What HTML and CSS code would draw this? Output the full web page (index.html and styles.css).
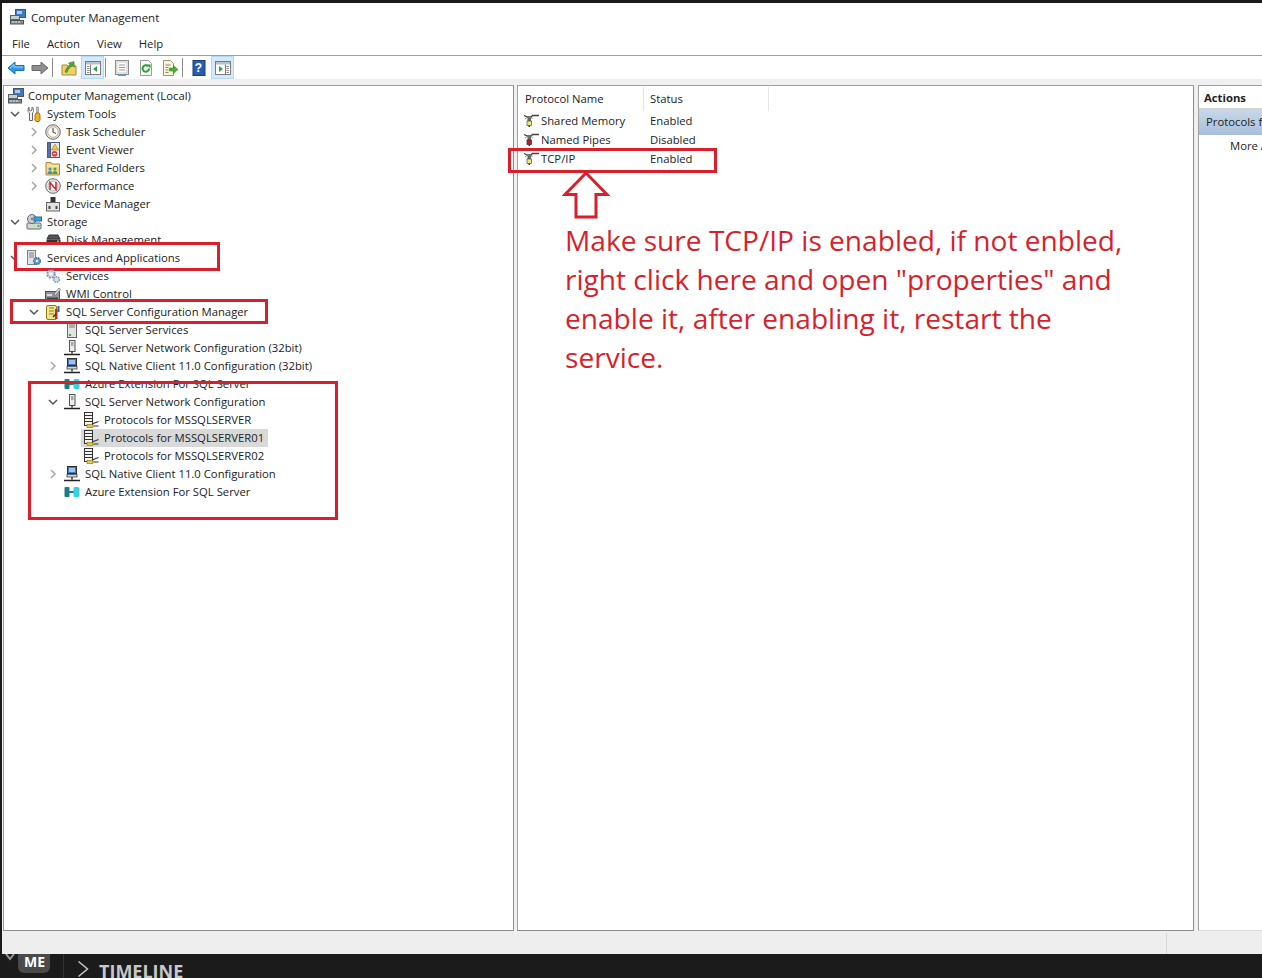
FILE: index.html
```html
<!DOCTYPE html>
<html lang="en">

<head>
  <meta charset="UTF-8">
  <title>Computer Management</title>
  <link rel="stylesheet" href="styles.css">
</head>

<body>
  <svg class="sprite" xmlns="http://www.w3.org/2000/svg">
    <symbol id="i-down" viewBox="0 0 10 6"><path d="M1 1l4 4 4-4" fill="none" stroke="#555" stroke-width="1.5"/></symbol>
    <symbol id="i-right" viewBox="0 0 6 10"><path d="M1 1l4 4-4 4" fill="none" stroke="#a6a6a6" stroke-width="1.5"/></symbol>

    <symbol id="i-computer" viewBox="0 0 16 16"><rect x="5.5" y=".5" width="10" height="8" fill="#3f78c4" stroke="#4a5560"/><rect x="7" y="2" width="5" height="3" fill="#a9cdf0"/><rect x=".5" y="6.5" width="9" height="4" fill="#c7ccd0" stroke="#5c6468"/><rect x=".5" y="11.5" width="13" height="3.5" fill="#8b9296" stroke="#4e5558"/><path d="M2 13h2M5 13h2M8 13h2" stroke="#e8e8e8"/></symbol>
    <symbol id="i-tools" viewBox="0 0 16 16"><path d="M3 1v3l1.500 1L6 4V1c1.200.8 1.600 2 1.600 3.500S7 6.500 6.500 7v7.500h-3V7C2.500 6.500 2 5.500 2 4.500S2 1.800 3 1z" fill="#f4f4f4" stroke="#666"/><rect x="10.500" y="1" width="2" height="6" fill="#b8b8b8" stroke="#777" stroke-width=".5"/><path d="M10 7h3l1 2v5l-1 1.500h-3l-1-1.500V9z" fill="#f0b323" stroke="#a06f10"/></symbol>
    <symbol id="i-clock" viewBox="0 0 16 16"><circle cx="8" cy="8" r="7.300" fill="#e9e4d6" stroke="#6d6d6d"/><circle cx="8" cy="8" r="5.300" fill="#fbfaf6" stroke="#b9b2a0"/><path d="M8 4v4l3 1.500" fill="none" stroke="#555" stroke-width="1.200"/></symbol>
    <symbol id="i-event" viewBox="0 0 16 16"><rect x="2.500" y=".5" width="12" height="15" fill="#e4ecf6" stroke="#4d5a86"/><rect x="2.500" y=".5" width="3" height="15" fill="#5a6ea6" stroke="#4d5a86"/><path d="M10 2l3.500 6h-7z" fill="#f2c531" stroke="#a5820f" stroke-width=".6"/><circle cx="9.500" cy="11.700" r="2.800" fill="#d33c3c"/><path d="M8 11.700h3" stroke="#fff"/></symbol>
    <symbol id="i-shared" viewBox="0 0 16 16"><path d="M1 5V2.500h5L7 4h7.500v11H1z" fill="#f1d68a" stroke="#a88b3c"/><rect x="2" y="5" width="12" height="1.500" fill="#fbeebc"/><circle cx="5" cy="9" r="1.500" fill="#3a8fc9"/><path d="M2.500 14c0-2 1-3 2.500-3s2.500 1 2.500 3z" fill="#3a8fc9"/><circle cx="10" cy="9" r="1.500" fill="#4aa24a"/><path d="M7.500 14c0-2 1-3 2.500-3s2.500 1 2.500 3z" fill="#4aa24a"/></symbol>
    <symbol id="i-perf" viewBox="0 0 16 16"><circle cx="8" cy="8" r="7.300" fill="#efefef" stroke="#666"/><circle cx="8" cy="8" r="5" fill="#fff" stroke="#b5b5b5"/><path d="M5 12V4.500l6 7V4" fill="none" stroke="#c42a2a" stroke-width="1.500"/></symbol>
    <symbol id="i-device" viewBox="0 0 16 16"><path d="M5.500 1h5v5h-5z" fill="#333"/><rect x="1.500" y="6.500" width="13" height="8.500" fill="#e2e2e2" stroke="#666"/><rect x="3.500" y="10" width="2" height="3" fill="#444"/><rect x="10.500" y="10" width="2" height="3" fill="#444"/></symbol>
    <symbol id="i-storage" viewBox="0 0 16 16"><rect x="1" y="9" width="14" height="6" rx="1" fill="#cfdcc8" stroke="#667"/><circle cx="6" cy="5" r="4.500" fill="#c9ced2" stroke="#667"/><circle cx="6" cy="5" r="1.200" fill="#7a8288"/><rect x="8" y="3" width="7.500" height="4" fill="#3aa0df" stroke="#24709f"/><rect x="11.500" y="11" width="2" height="2" fill="#4caf50"/></symbol>
    <symbol id="i-disk" viewBox="0 0 16 16"><path d="M2 7l2-4h9l2 4z" fill="#555" stroke="#333"/><rect x="1.500" y="7.500" width="14" height="4" fill="#333"/><rect x="12" y="8.500" width="2" height="1.500" fill="#5bd05b"/><rect x="1.500" y="11.500" width="14" height="3" fill="#e8d5d5" stroke="#b3a0a0"/></symbol>
    <symbol id="i-servapp" viewBox="0 0 16 16"><rect x="1.500" y=".5" width="8" height="14" fill="#dfe3e8" stroke="#7a828a"/><path d="M3 3h5M3 5h5M3 7h5" stroke="#7a828a"/><circle cx="11" cy="11" r="3.300" fill="#6da2d6" stroke="#3d6e9e" stroke-width="1.500" stroke-dasharray="1.600 .7"/><circle cx="11" cy="11" r="1.100" fill="#fff"/></symbol>
    <symbol id="i-gears" viewBox="0 0 16 16"><circle cx="6" cy="6" r="3.800" fill="#d9e2ec" stroke="#7f9ab8" stroke-width="2" stroke-dasharray="2 1"/><circle cx="6" cy="6" r="1.300" fill="#fff"/><circle cx="11.500" cy="11.500" r="2.800" fill="#d9e2ec" stroke="#7f9ab8" stroke-width="1.600" stroke-dasharray="1.600 .8"/></symbol>
    <symbol id="i-wmi" viewBox="0 0 16 16"><rect x=".5" y="5.500" width="14" height="10" fill="#8e9499" stroke="#4d5358"/><rect x="2" y="8" width="5" height="2" fill="#d8dce0"/><rect x="2" y="11.500" width="11" height="1.500" fill="#3e4449"/><path d="M9 8l5-6 1.500 1.500-5 6z" fill="#d7dbe0" stroke="#666" stroke-width=".7"/></symbol>
    <symbol id="i-sqlcfg" viewBox="0 0 16 16"><rect x="1.500" y="1.500" width="10" height="14" rx="1.500" fill="#f2e48a" stroke="#8f7d20"/><path d="M4 4h5M4 7h5M4 10h5" stroke="#8f7d20"/><rect x="10" y="5" width="2.500" height="10" fill="#c62a2a"/><rect x="12.500" y="2" width="2" height="6" fill="#2b5fa8"/><path d="M8 13l3-3" stroke="#333" stroke-width="1.400"/></symbol>
    <symbol id="i-tower" viewBox="0 0 16 16"><rect x="3.500" y=".5" width="9" height="15" fill="#e3e3e3" stroke="#666"/><path d="M5 3h6M5 5h6" stroke="#777"/><rect x="5" y="12" width="2" height="2" fill="#35b035"/></symbol>
    <symbol id="i-net" viewBox="0 0 16 16"><rect x="5.500" y=".5" width="5.500" height="11" fill="#ececec" stroke="#555"/><path d="M7 3h2.500M7 5h2.500" stroke="#666"/><path d="M8 11.500v2M0 14.500h16" stroke="#222" stroke-width="1.300"/></symbol>
    <symbol id="i-client" viewBox="0 0 16 16"><rect x="3.500" y=".5" width="9" height="7" fill="#3f78c4" stroke="#333"/><rect x="5" y="2" width="6" height="4" fill="#9cc6ee"/><rect x="3" y="8.500" width="10" height="2.500" fill="#d6d6d6" stroke="#444" stroke-width=".8"/><path d="M8 11v2.500M0 14.500h16" stroke="#222" stroke-width="1.300"/></symbol>
    <symbol id="i-azure" viewBox="0 0 16 16"><rect x=".5" y="3" width="5" height="10" rx="1" fill="#1b7f86"/><path d="M5 8h5" stroke="#1b7f86" stroke-width="2"/><rect x="9.500" y="3" width="6" height="10" rx="1.500" fill="#35d3e0"/></symbol>
    <symbol id="i-proto" viewBox="0 0 16 16"><rect x="1.500" y=".5" width="8" height="13" fill="#f4f4f4" stroke="#333"/><path d="M1.500 3.500h8M1.500 6.500h8M1.500 9.500h8" stroke="#333"/><rect x="4" y="12.500" width="6" height="3" fill="#e6c93a" stroke="#8f7d20" stroke-width=".7"/><path d="M9 12l6.500-2.500M10.500 14h5" stroke="#333" stroke-width="1.200"/></symbol>
    <symbol id="i-plug-on" viewBox="0 0 16 16"><path d="M1 2.500l3.500 1.500h3.500l1.500-1.500H16" fill="none" stroke="#444" stroke-width="1.300"/><path d="M4.500 4l-2.500 2M8 4l1.500 2" fill="none" stroke="#888"/><rect x="4.500" y="5" width="3.500" height="3" fill="#666"/><rect x="4" y="8" width="4.500" height="4.500" fill="#ecea7a" stroke="#55551a" stroke-width=".7"/><rect x="5.500" y="12.500" width="1.500" height="1.500" fill="#333"/></symbol>
    <symbol id="i-plug-off" viewBox="0 0 16 16"><path d="M1 2.500l3.500 1.500h3.500l1.500-1.500H16" fill="none" stroke="#444" stroke-width="1.300"/><path d="M4.500 4l-2.500 2M8 4l1.500 2" fill="none" stroke="#888"/><rect x="4.500" y="5" width="3.500" height="3" fill="#666"/><rect x="4" y="8" width="4.500" height="4.500" fill="#b4202c" stroke="#551a1a" stroke-width=".7"/><rect x="5.500" y="12.500" width="1.500" height="1.500" fill="#333"/></symbol>

    <symbol id="t-back" viewBox="0 0 18 16"><path d="M1 8l7-6v3.500h9v5H8V14z" fill="#2f9be6" stroke="#1c6fae"/><path d="M3 8l4-3.500V7h9" fill="none" stroke="#9fd6fa"/></symbol>
    <symbol id="t-fwd" viewBox="0 0 18 16"><path d="M17 8l-7-6v3.500H1v5h9V14z" fill="#8f8f8f" stroke="#6a6a6a"/></symbol>
    <symbol id="t-up" viewBox="0 0 16 16"><path d="M1 5h5l1 1h8v9H1z" fill="#f0cf6d" stroke="#a8892e"/><path d="M4 12c1-4 3-6 5-7L7.500 3 13 1.500 13.500 7 11.500 5.800C9.500 7 7 9 6 12.500z" fill="#4ea72e" stroke="#3a7d22" stroke-width=".5"/></symbol>
    <symbol id="t-tree" viewBox="0 0 16 16"><rect x=".5" y="1.500" width="15" height="13" fill="#fff" stroke="#7b7b7b"/><rect x="1" y="2" width="14" height="2.500" fill="#b6c2cc"/><path d="M5.500 4.500v10" stroke="#7b7b7b"/><path d="M2 6.500h2.500M2 8.500h2.500M2 10.500h2.500M2 12.500h2.500" stroke="#8a8a8a"/><path d="M12 6v6L8 9z" fill="#2f9e44"/></symbol>
    <symbol id="t-list" viewBox="0 0 16 16"><rect x="1.500" y=".5" width="13" height="14" fill="#f4f4f4" stroke="#8b8b8b"/><rect x="3" y="2" width="10" height="11" fill="#fff" stroke="#b5b5b5" stroke-width=".7"/><path d="M5 5h6M5 7.500h6M5 10h6" stroke="#9a9a9a"/><rect x="4" y="14.500" width="8" height="1.500" fill="#4aa8e0"/></symbol>
    <symbol id="t-refresh" viewBox="0 0 16 16"><path d="M2.500.5h8l3 3v12h-11z" fill="#f8f8f8" stroke="#9a9a9a"/><path d="M11 8.500a3.200 3.200 0 1 1-1-2.300" fill="none" stroke="#2f9e2f" stroke-width="2"/><path d="M8.500 4.500h4v4z" fill="#2f9e2f"/></symbol>
    <symbol id="t-export" viewBox="0 0 16 16"><path d="M1.500.5h7l3 3v12h-10z" fill="#f8f4dc" stroke="#9a9a7a"/><path d="M3.500 5h5M3.500 7.500h3M3.500 10h3M3.500 12.500h3" stroke="#8a8a6a"/><path d="M7.500 8h4V5.500L16 9.500l-4.500 4V11h-4z" fill="#4caf33" stroke="#2f7d1f" stroke-width=".5"/></symbol>
    <symbol id="t-help" viewBox="0 0 16 16"><rect x="2" y=".5" width="12" height="15" fill="#2a5db0" stroke="#1b3c78"/></symbol>
    <symbol id="t-action" viewBox="0 0 16 16"><rect x=".5" y="1.500" width="15" height="13" fill="#fff" stroke="#7b7b7b"/><rect x="1" y="2" width="14" height="2.500" fill="#b6c2cc"/><path d="M10.500 4.500v10" stroke="#7b7b7b"/><path d="M11.500 6.500H14M11.500 8.500H14M11.500 10.500H14M11.500 12.500H14" stroke="#8a8a8a"/><path d="M4 6v6l4-3z" fill="#2f9e44"/></symbol>
  </svg>

  <div class="window">
    <div class="titlebar">
      <svg class="ico"><use href="#i-computer"/></svg>
      <span>Computer Management</span>
    </div>
    <nav class="menubar">
      <span>File</span><span>Action</span><span>View</span><span>Help</span>
    </nav>
    <div class="toolbar">
      <button class="tb"><svg class="tb-wide"><use href="#t-back"/></svg></button>
      <button class="tb"><svg class="tb-wide"><use href="#t-fwd"/></svg></button>
      <i class="tb-sep"></i>
      <button class="tb"><svg class="ico"><use href="#t-up"/></svg></button>
      <button class="tb on"><svg class="ico"><use href="#t-tree"/></svg></button>
      <i class="tb-sep"></i>
      <button class="tb"><svg class="ico"><use href="#t-list"/></svg></button>
      <button class="tb"><svg class="ico"><use href="#t-refresh"/></svg></button>
      <button class="tb"><svg class="ico"><use href="#t-export"/></svg></button>
      <i class="tb-sep"></i>
      <button class="tb tb-help"><svg class="ico"><use href="#t-help"/></svg><b>?</b></button>
      <button class="tb on"><svg class="ico"><use href="#t-action"/></svg></button>
    </div>

    <div class="panes">
      <section class="pane tree">
        <div class="row l0"><span class="item"><svg class="ico"><use href="#i-computer"/></svg><span class="lbl">Computer Management (Local)</span></span></div>
        <div class="row l1"><svg class="chev"><use href="#i-down"/></svg><span class="item"><svg class="ico"><use href="#i-tools"/></svg><span class="lbl">System Tools</span></span></div>
        <div class="row l2"><svg class="chev"><use href="#i-right"/></svg><span class="item"><svg class="ico"><use href="#i-clock"/></svg><span class="lbl">Task Scheduler</span></span></div>
        <div class="row l2"><svg class="chev"><use href="#i-right"/></svg><span class="item"><svg class="ico"><use href="#i-event"/></svg><span class="lbl">Event Viewer</span></span></div>
        <div class="row l2"><svg class="chev"><use href="#i-right"/></svg><span class="item"><svg class="ico"><use href="#i-shared"/></svg><span class="lbl">Shared Folders</span></span></div>
        <div class="row l2"><svg class="chev"><use href="#i-right"/></svg><span class="item"><svg class="ico"><use href="#i-perf"/></svg><span class="lbl">Performance</span></span></div>
        <div class="row l2"><i class="chev"></i><span class="item"><svg class="ico"><use href="#i-device"/></svg><span class="lbl">Device Manager</span></span></div>
        <div class="row l1"><svg class="chev"><use href="#i-down"/></svg><span class="item"><svg class="ico"><use href="#i-storage"/></svg><span class="lbl">Storage</span></span></div>
        <div class="row l2"><i class="chev"></i><span class="item"><svg class="ico"><use href="#i-disk"/></svg><span class="lbl">Disk Management</span></span></div>
        <div class="row l1"><svg class="chev"><use href="#i-down"/></svg><i class="mark mark-services"></i><span class="item"><svg class="ico"><use href="#i-servapp"/></svg><span class="lbl">Services and Applications</span></span></div>
        <div class="row l2"><i class="chev"></i><span class="item"><svg class="ico"><use href="#i-gears"/></svg><span class="lbl">Services</span></span></div>
        <div class="row l2"><i class="chev"></i><span class="item"><svg class="ico"><use href="#i-wmi"/></svg><span class="lbl">WMI Control</span></span></div>
        <div class="row l2"><svg class="chev"><use href="#i-down"/></svg><span class="item"><svg class="ico"><use href="#i-sqlcfg"/></svg><span class="lbl">SQL Server Configuration Manager</span></span></div>
        <div class="row l3"><i class="chev"></i><span class="item"><svg class="ico"><use href="#i-tower"/></svg><span class="lbl">SQL Server Services</span></span></div>
        <div class="row l3"><i class="chev"></i><span class="item"><svg class="ico"><use href="#i-net"/></svg><span class="lbl">SQL Server Network Configuration (32bit)</span></span></div>
        <div class="row l3"><svg class="chev"><use href="#i-right"/></svg><span class="item"><svg class="ico"><use href="#i-client"/></svg><span class="lbl">SQL Native Client 11.0 Configuration (32bit)</span></span></div>
        <div class="row l3"><i class="chev"></i><span class="item"><svg class="ico"><use href="#i-azure"/></svg><span class="lbl">Azure Extension For SQL Server</span></span></div>
        <div class="row l3"><svg class="chev"><use href="#i-down"/></svg><span class="item"><svg class="ico"><use href="#i-net"/></svg><span class="lbl">SQL Server Network Configuration</span></span></div>
        <div class="row l4"><i class="chev"></i><span class="item"><svg class="ico"><use href="#i-proto"/></svg><span class="lbl">Protocols for MSSQLSERVER</span></span></div>
        <div class="row l4"><i class="chev"></i><span class="item sel"><svg class="ico"><use href="#i-proto"/></svg><span class="lbl">Protocols for MSSQLSERVER01</span></span></div>
        <div class="row l4"><i class="chev"></i><span class="item"><svg class="ico"><use href="#i-proto"/></svg><span class="lbl">Protocols for MSSQLSERVER02</span></span></div>
        <div class="row l3"><svg class="chev"><use href="#i-right"/></svg><span class="item"><svg class="ico"><use href="#i-client"/></svg><span class="lbl">SQL Native Client 11.0 Configuration</span></span></div>
        <div class="row l3"><i class="chev"></i><span class="item"><svg class="ico"><use href="#i-azure"/></svg><span class="lbl">Azure Extension For SQL Server</span></span></div>
      </section>

      <section class="pane list">
        <div class="list-head"><span>Protocol Name</span><span>Status</span></div>
        <div class="list-row"><span class="name"><svg class="ico"><use href="#i-plug-on"/></svg>Shared Memory</span><span>Enabled</span></div>
        <div class="list-row"><span class="name"><svg class="ico"><use href="#i-plug-off"/></svg>Named Pipes</span><span>Disabled</span></div>
        <div class="list-row"><span class="name"><svg class="ico"><use href="#i-plug-on"/></svg>TCP/IP</span><span>Enabled</span></div>
      </section>

      <section class="pane actions">
        <div class="act-head">Actions</div>
        <div class="act-sel">Protocols for MSSQLSERVER01</div>
        <div class="act-item">More Actions...</div>
      </section>
    </div>

    <div class="statusbar"><i></i></div>
  </div>

  <div class="taskstrip">
    <svg class="strip-arrow" viewBox="0 0 10 8"><path d="M1 0l4 5 4-5" fill="none" stroke="#9a9a9a" stroke-width="2"/></svg>
    <span class="badge">ME</span>
    <i class="strip-line"></i>
    <svg class="strip-chev" viewBox="0 0 12 18"><path d="M1.500 1.500l9 7.500-9 7.500" fill="none" stroke="#c8c8c8" stroke-width="1.500"/></svg>
    <span class="strip-title">TIMELINE</span>
  </div>

  <!-- red markup drawn over the screenshot -->
  <i class="mark mark-sql"></i>
  <i class="mark mark-net"></i>
  <i class="mark mark-tcp"></i>
  <svg class="mark-arrow" viewBox="0 0 48 48"><path d="M24 2L3 23.500h11V46h20V23.500h11z" fill="#fff" stroke="#d81f2b" stroke-width="3"/></svg>
  <p class="note">Make sure TCP/IP is enabled, if not enbled,<br>right click here and open "properties" and<br>enable it, after enabling it, restart the<br>service.</p>
</body>

</html>
```

FILE: styles.css
```css
* {
  box-sizing: border-box;
}

html, body {
  height: 100%;
}

body {
  position: relative;
  margin: 0;
  padding-top: 3px;
  overflow: hidden;
  background-color: #1b1b1b;
  font-family: "Open Sans", sans-serif;
  font-size: 11.300px;
  color: #222;
}

.sprite {
  position: absolute;
  width: 0;
  height: 0;
}

.ico {
  flex: none;
  width: 16px;
  height: 16px;
}

/* window */
.window {
  margin-left: 2px;
  height: 951px;
  background-color: #fff;
  display: flex;
  flex-direction: column;
}

.titlebar {
  display: flex;
  align-items: center;
  gap: 5px;
  height: 29px;
  padding: 0 0 1px 8px;
  font-size: 11.500px;
}

.menubar {
  display: flex;
  gap: 17px;
  align-items: center;
  height: 24px;
  padding: 0 0 0 10px;
  border-bottom: 1px solid #a0a0a0;
}

.toolbar {
  display: flex;
  align-items: center;
  gap: 1px;
  height: 23px;
  padding-left: 2px;
}

.tb {
  position: relative;
  display: flex;
  align-items: center;
  justify-content: center;
  width: 23px;
  height: 23px;
  padding: 0;
  border: 1px solid transparent;
  background: none;
}
.tb.on {
  background-color: #d4e9f9;
  border-color: #b4daf3;
}
.tb-wide {
  width: 18px;
  height: 16px;
}
.tb-help b {
  position: absolute;
  font-size: 12px;
  color: #fff;
}
.tb-sep {
  width: 1px;
  height: 19px;
  margin-right: 3px;
  background-color: #8c8c8c;
}

/* panes */
.panes {
  flex: 1;
  display: flex;
  gap: 3px;
  min-height: 0;
  padding: 6px 0 0 1px;
  background-color: #f0f0f0;
}

.pane {
  background-color: #fff;
  border: 1px solid #8c8c8c;
  border-top-color: #a0a0a0;
  border-left-color: #a0a0a0;
}

.tree {
  width: 511px;
  padding: 1px 0 0 1px;
}
.list {
  width: 677px;
  padding: 1px 0 0 0;
}
.actions {
  flex: 1;
  margin-left: 1px;
  white-space: nowrap;
  overflow: hidden;
  border-right: 0;
  border-bottom-color: #dcdcdc;
}

/* tree */
.row {
  position: relative;
  display: flex;
  align-items: center;
  height: 18px;
  white-space: nowrap;
}
.l0 {padding-left: 2px}
.l2 {padding-left: 19px}
.l3 {padding-left: 38px}
.l4 {padding-left: 57px}

.chev {
  position: relative;
  flex: none;
  width: 10px;
  height: 10px;
  margin: 0 4px 0 5px;
}

.item {
  position: relative;
  display: flex;
  align-items: center;
  height: 18px;
  padding: 0 4px 0 2px;
}
.l0 .item {padding-left: 1px}
.sel {background-color: #d9d9d9}
.lbl {margin: 0 0 2px 5px}
.l0 .lbl {margin-left: 4px}

/* list view */
.list-head {
  display: flex;
  height: 24px;
  align-items: center;
}
.list-head span {
  width: 125px;
  height: 100%;
  padding: 4px 0 0 6px;
  border-right: 1px solid #e5e5e5;
}
.list-head span:first-child {
  width: 126px;
  padding-left: 7px;
}
.list-row {
  display: flex;
  align-items: center;
  height: 19px;
  white-space: nowrap;
}
.list-row .name {
  display: flex;
  align-items: center;
  gap: 2px;
  width: 125px;
  padding-left: 5px;
}
.list-row .name + span {
  padding-left: 7px;
}

/* actions */
.act-head {
  height: 23px;
  padding: 4px 0 0 5px;
  font-weight: 700;
  border-bottom: 1px solid #d0d0d0;
}
.act-sel {
  height: 26px;
  padding: 5px 0 0 7px;
  background: linear-gradient(#c9d8e8, #a7bfdb);
}
.act-item {
  height: 24px;
  padding: 3px 0 0 31px;
}

.statusbar {
  flex: none;
  position: relative;
  height: 23px;
  background-color: #eee;
}
.statusbar i {
  position: absolute;
  left: 1164px;
  top: 2px;
  bottom: 0;
  width: 1px;
  background-color: #d8d8d8;
}

/* dark strip under the window */
.taskstrip {
  position: relative;
  display: flex;
  align-items: flex-start;
  height: 24px;
  overflow: hidden;
  color: #fff;
}
.strip-arrow {
  width: 10px;
  height: 8px;
  margin-left: 5px;
}
.badge {
  width: 32px;
  height: 19px;
  margin-left: 3px;
  padding-left: 6px;
  border-radius: 0 0 6px 6px;
  background-color: #4a4a4a;
  font-size: 14px;
  font-weight: 700;
  line-height: 16px;
}
.strip-line {
  width: 1px;
  height: 24px;
  margin-left: 13px;
  background-color: #333;
}
.strip-chev {
  width: 12px;
  height: 18px;
  margin: 6px 0 0 13px;
}
.strip-title {
  margin: 5px 0 0 10px;
  font-size: 18px;
  font-weight: 700;
  line-height: 24px;
  color: #c8c8c8;
}

/* red markup */
.mark {
  position: absolute;
  border: 3px solid #d81f2b;
}
.mark-services {
  left: 9px;
  top: -7px;
  width: 206px;
  height: 29px;
  background-color: #fff;
}
.mark-sql {
  left: 10px;
  top: 299px;
  width: 258px;
  height: 25px;
}
.mark-net {
  left: 28px;
  top: 381px;
  width: 310px;
  height: 139px;
}
.mark-tcp {
  left: 508px;
  top: 148px;
  width: 209px;
  height: 25px;
}
.mark-arrow {
  position: absolute;
  left: 562px;
  top: 171px;
  width: 48px;
  height: 48px;
}
.note {
  position: absolute;
  left: 565px;
  top: 221px;
  margin: 0;
  font-size: 28.100px;
  line-height: 39px;
  white-space: nowrap;
  color: #d81f2b;
}
```
